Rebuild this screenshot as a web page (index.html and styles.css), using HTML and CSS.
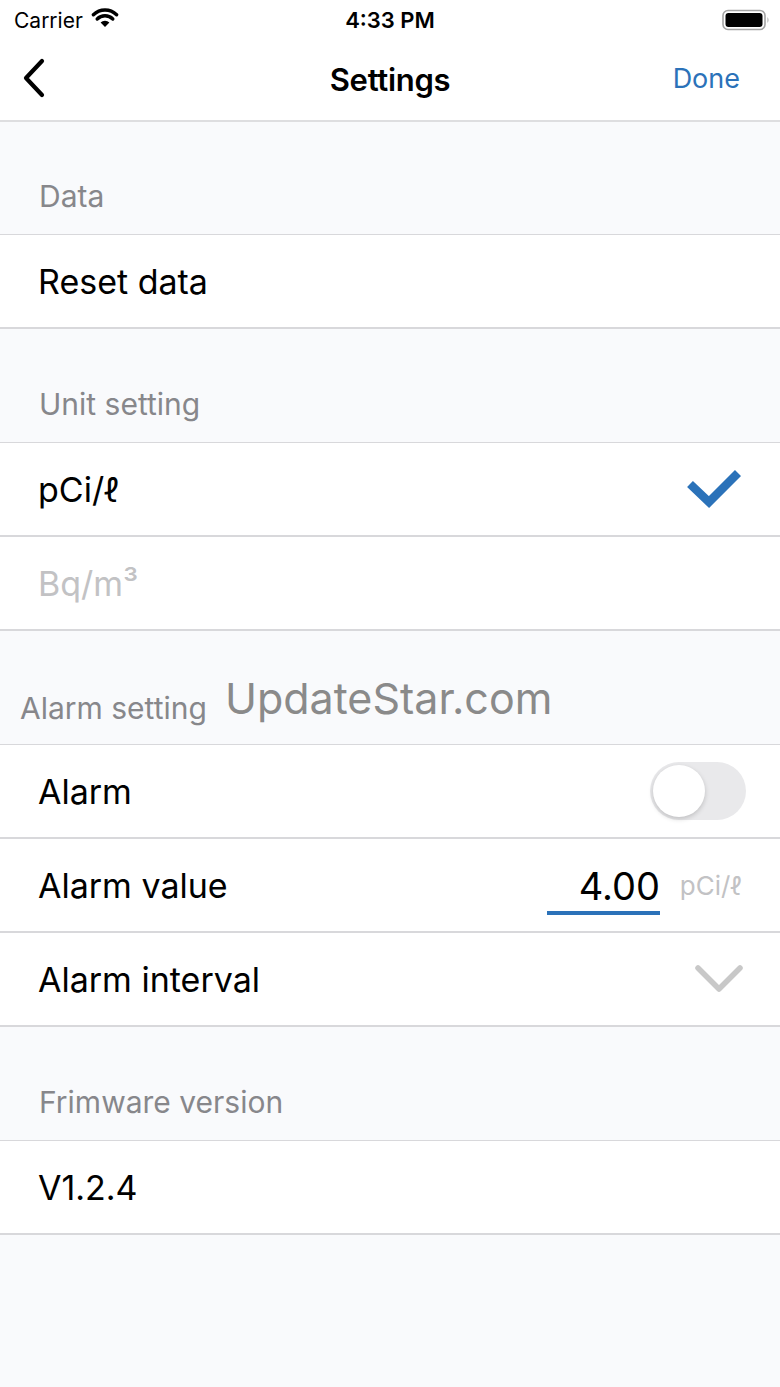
FILE: index.html
```html
<!DOCTYPE html>
<html lang="en">
<head>
  <meta charset="UTF-8" />
  <meta name="viewport" content="width=device-width, initial-scale=1.0" />
  <title>Settings</title>
  <link rel="stylesheet" href="styles.css">
</head>
<body>
  <div class="status-bar">
    <div class="carrier">
      <span>Carrier</span>
      <svg class="wifi" width="28" height="20" viewBox="0 0 28 20">
        <path d="M14 19 L9.6 14.4 A6.4 6.4 0 0 1 18.4 14.4 Z" fill="#000"/>
        <path d="M6.2 11 A11 11 0 0 1 21.8 11" stroke="#000" stroke-width="3.4" fill="none" stroke-linecap="round"/>
        <path d="M2.4 6.8 A16.5 16.5 0 0 1 25.6 6.8" stroke="#000" stroke-width="3.4" fill="none" stroke-linecap="round"/>
      </svg>
    </div>
    <div class="clock">4:33 PM</div>
    <div class="battery">
      <svg width="48" height="22" viewBox="0 0 48 22">
        <rect x="1" y="1.5" width="42" height="19" rx="5" fill="none" stroke="#a3a3a3" stroke-width="1.6"/>
        <rect x="3.5" y="4" width="37" height="14" rx="3" fill="#000"/>
        <path d="M45.5 8 Q47.5 11 45.5 14 Z" fill="#a3a3a3"/>
      </svg>
    </div>
  </div>

  <header class="nav-bar">
    <svg class="back" width="30" height="42" viewBox="0 0 30 42">
      <polyline points="22,4 6,21 22,38" fill="none" stroke="#000" stroke-width="4.2" stroke-linecap="round" stroke-linejoin="round"/>
    </svg>
    <h1 class="title">Settings</h1>
    <a class="done" href="#">Done</a>
  </header>

  <main class="settings">
    <div class="section-head first">Data</div>
    <div class="row">Reset data</div>

    <div class="section-head">Unit setting</div>
    <div class="row">
      <span>pCi/ℓ</span>
      <svg class="check" width="60" height="44" viewBox="0 0 60 44">
        <polyline points="6,17 25,35 54,6" fill="none" stroke="#2b72b9" stroke-width="8.5" stroke-linejoin="miter"/>
      </svg>
    </div>
    <div class="row muted">Bq/m³</div>

    <div class="section-head alarm-head">
      <span>Alarm setting</span>
      <span class="watermark">UpdateStar.com</span>
    </div>
    <div class="row">
      <span>Alarm</span>
      <div class="toggle"><div class="knob"></div></div>
    </div>
    <div class="row">
      <span>Alarm value</span>
      <div class="value-field">
        <span class="value">4.00</span>
        <span class="unit">pCi/ℓ</span>
      </div>
    </div>
    <div class="row">
      <span>Alarm interval</span>
      <svg class="chevron" width="50" height="30" viewBox="0 0 50 30">
        <polyline points="4,4 25,25 46,4" fill="none" stroke="#c8c8c8" stroke-width="5.5" stroke-linecap="round" stroke-linejoin="round"/>
      </svg>
    </div>

    <div class="section-head">Frimware version</div>
    <div class="row">V1.2.4</div>
  </main>
</body>
</html>
```

FILE: styles.css
```css
:root {
  --bg: #f9fafc;
  --line: #d8d8db;
  --head-text: #87878b;
  --muted: #c2c2c4;
  --blue: #2b72b9;
}
* {
  margin: 0;
  padding: 0;
  box-sizing: border-box;
  font-family: "Inter", "Liberation Sans", sans-serif;
}
body {
  width: 780px;
  min-height: 1387px;
  background-color: var(--bg);
  color: #000;
}
.status-bar {
  height: 40px;
  background-color: #fff;
  display: grid;
  grid-template-columns: 1fr auto 1fr;
  align-items: center;
  padding: 0 12px;
}
.carrier {
  display: flex;
  align-items: center;
  gap: 8px;
  font-size: 21px;
  margin-left: 2px;
}
.wifi { margin-top: -4px; }
.clock {
  font-size: 22px;
  font-weight: 600;
}
.battery {
  display: flex;
  justify-content: flex-end;
  margin-right: -2px;
}
.nav-bar {
  height: 82px;
  background-color: #fff;
  border-bottom: 2px solid #dedee0;
  display: grid;
  grid-template-columns: 1fr auto 1fr;
  align-items: center;
  padding: 0 40px 2px;
}
.back {
  margin-top: -2px;
  margin-left: -20px;
}
.title {
  font-size: 31px;
  font-weight: 600;
  letter-spacing: -0.3px;
}
.done {
  justify-self: end;
  color: var(--blue);
  font-size: 27px;
  text-decoration: none;
  margin-top: -2px;
}
.section-head {
  height: 114px;
  display: flex;
  align-items: flex-end;
  padding: 0 39px 20px;
  font-size: 30px;
  color: var(--head-text);
  border-bottom: 1px solid var(--line);
}
.section-head.first { height: 113px; }
.alarm-head {
  padding-left: 20px;
  padding-bottom: 18px;
  gap: 18px;
}
.watermark {
  font-size: 43px;
  color: #8a8a8a;
  margin-bottom: 2px;
}
.row {
  height: 94px;
  background-color: #fff;
  border-bottom: 2px solid var(--line);
  display: flex;
  align-items: center;
  justify-content: space-between;
  padding: 0 36px 0 38px;
  font-size: 34px;
}
.muted { color: var(--muted); }
.toggle {
  width: 96px;
  height: 58px;
  border-radius: 29px;
  background-color: #e9e9eb;
  padding: 3px;
  margin-right: -2px;
}
.knob {
  width: 52px;
  height: 52px;
  border-radius: 50%;
  background-color: #fff;
  box-shadow: 0 2px 5px rgba(0, 0, 0, 0.18);
}
.value-field {
  display: flex;
  align-items: center;
  gap: 20px;
  margin-right: 2px;
}
.value {
  width: 113px;
  text-align: right;
  font-size: 38px;
  padding: 0 0 2px 0;
  border-bottom: 4px solid var(--blue);
  margin-top: 8px;
}
.unit {
  font-size: 26px;
  color: var(--muted);
}
```
